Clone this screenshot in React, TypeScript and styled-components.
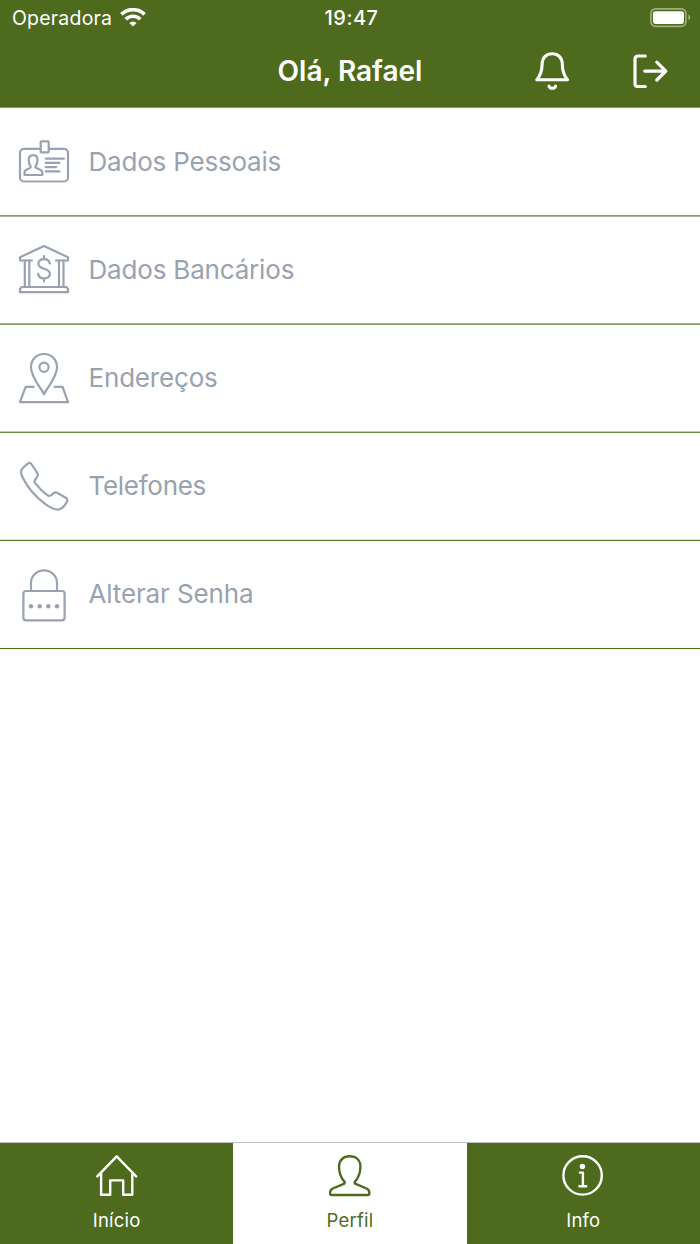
import React from "react";
import styled, { createGlobalStyle } from "styled-components";

const green = "#4d6a1d";
const slate = "#98a2b0";

const GlobalStyle = createGlobalStyle`
  *, *::before, *::after { box-sizing: border-box; }
  body { margin: 0; background: #fff; font-family: Inter, "Liberation Sans", sans-serif; }
`;

const Screen = styled.div`
  display: flex;
  flex-direction: column;
  width: 700px;
  height: 1244px;
  background: #fff;
`;

const Header = styled.header`
  height: 108px;
  background: ${green};
  border-bottom: 1px solid #8a9a6c;
  color: #fff;
`;

const StatusBar = styled.div`
  display: grid;
  grid-template-columns: 1fr auto 1fr;
  align-items: center;
  height: 36px;
  padding: 0 9px 0 12px;
`;

const Carrier = styled.div`
  display: flex;
  align-items: center;
  gap: 8px;
`;

const StatusText = styled.span<{ $bold?: boolean }>`
  font-size: ${(p) => (p.$bold ? 20 : 19.5)}px;
  line-height: 36px;
  font-weight: ${(p) => (p.$bold ? 550 : 400)};
  letter-spacing: ${(p) => (p.$bold ? "0.5px" : "0.2px")};
`;

const BatterySlot = styled.div`
  display: flex;
  justify-content: flex-end;
`;

const TitleBar = styled.div`
  display: grid;
  grid-template-columns: 1fr auto 1fr;
  align-items: center;
  height: 70px;
`;

const Title = styled.h1`
  grid-column: 2;
  margin: 0;
  font-size: 28px;
  line-height: 70px;
  font-weight: 580;
  letter-spacing: 0;
`;

const Actions = styled.div`
  display: flex;
  justify-content: flex-end;
  gap: 61px;
  padding-right: 31px;
`;

const IconButton = styled.button`
  display: flex;
  padding: 0;
  border: 0;
  background: none;
  color: inherit;
`;

const Menu = styled.main`
  flex: 1;
  padding-top: 1px;
`;

const MenuRow = styled.div`
  display: flex;
  align-items: center;
  gap: 18.5px;
  height: 106px;
  padding-left: 18px;
  color: ${slate};
`;

const Divider = styled.div<{ $top: number; $bottom: number }>`
  height: 2px;
  border-top: 1px solid rgba(77, 112, 22, ${(p) => p.$top});
  border-bottom: 1px solid rgba(77, 112, 22, ${(p) => p.$bottom});
`;

const MenuLabel = styled.span<{ $spacing: number }>`
  font-size: 26px;
  line-height: 36px;
  letter-spacing: ${(p) => p.$spacing}px;
`;

const TabBar = styled.nav`
  display: grid;
  grid-template-columns: repeat(3, 1fr);
  height: 102px;
  border-top: 1px solid #bfc1bd;
`;

const Tab = styled.div<{ $active?: boolean }>`
  display: flex;
  flex-direction: column;
  align-items: center;
  gap: 10px;
  padding-top: 12px;
  background: ${(p) => (p.$active ? "#fff" : green)};
  color: ${(p) => (p.$active ? green : "#fff")};
`;

const TabLabel = styled.span`
  font-size: 18.5px;
  line-height: 26px;
  letter-spacing: 0.2px;
`;

const LineArt = styled.svg.attrs({ fill: "none", stroke: "currentColor", strokeLinecap: "round", strokeLinejoin: "round" })`
  display: block;
  flex: none;
`;

const MenuIcon = ({ children }: { children: React.ReactNode }) => (
  <LineArt width="52" height="56" viewBox="0 0 52 56" strokeWidth="2.2">{children}</LineArt>
);

const TabIcon = ({ children }: { children: React.ReactNode }) => (
  <LineArt width="42" height="42" viewBox="0 0 42 42" strokeWidth="2.4">{children}</LineArt>
);

const Wifi = () => (
  <svg width="26" height="20" viewBox="0 0 26 20" fill="none" stroke="currentColor" strokeWidth="3.6">
    <path d="M1.4 6.4A16.6 16.6 0 0 1 24.6 6.4" />
    <path d="M5.7 11.2A10.4 10.4 0 0 1 20.3 11.2" />
    <path d="M13 18.6 9.4 15A5 5 0 0 1 16.6 15Z" fill="currentColor" stroke="none" />
  </svg>
);

const Battery = () => (
  <svg width="42" height="20" viewBox="0 0 42 20">
    <rect x="1.9" y="0.9" width="35" height="17.4" rx="4.5" fill="none" stroke="#fff" strokeOpacity="0.45" strokeWidth="1.7" />
    <rect x="4" y="3.3" width="31" height="12.6" rx="2.3" fill="#fff" />
    <path d="M39.4 6.4Q41.2 7.5 41.2 9.3T39.4 12.2Z" fill="#fff" fillOpacity="0.5" />
  </svg>
);

const Bell = () => (
  <LineArt width="36" height="42" viewBox="0 0 36 42" strokeWidth="3.1">
    <path d="M2.8 29.7C6.4 25.6 8.1 22 8.1 14.2C8.1 7.8 12.2 3.7 18.2 3.7S28.3 7.8 28.3 14.2C28.3 22 30 25.6 33.6 29.7Z" />
    <path d="M15 36.2C15.9 38.9 20.7 38.9 21.6 36.2" />
  </LineArt>
);

const Logout = () => (
  <LineArt width="38" height="42" viewBox="0 0 38 42" strokeWidth="3.2">
    <path d="M14.3 6H7.2Q4 6 4 9.2V33.4Q4 36.5 7.2 36.5H14.3M13.8 21.1H34.8M25.8 12.2 34.8 21.1 25.8 30" />
  </LineArt>
);

const items = [
  {
    label: "Dados Pessoais",
    spacing: -0.2,
    line: [0.68, 0.5],
    art: (
      <>
        <rect x="2" y="14.9" width="48" height="32.6" rx="4" />
        <rect x="22.7" y="7.3" width="8" height="11" rx="0.6" fill="#fff" />
        <path d="M27.8 24.6H46M27.8 28.9H41.4M27.8 33.1H38.2M27.8 37.4H41.4" />
        <path d="M12.8 32.8C10.9 30.6 10.7 28.3 10.7 26C10.7 23 12.4 21.1 15.1 21.1S19.5 23 19.5 26C19.5 28.3 19.3 30.6 17.4 32.8C17.4 35.3 24.3 34.3 24.3 38.6V41H6.5V38.6C6.5 34.3 12.8 35.3 12.8 32.8Z" />
      </>
    ),
  },
  {
    label: "Dados Bancários",
    spacing: -0.18,
    line: [0.52, 0.66],
    art: (
      <>
        <path d="M14 18.5H2V15.3L26 4 50 15.3V18.5H38" />
        <path d="M6.8 18.5V44.8M11.3 18.5V44.8M41 18.5V44.8M45.5 18.5V44.8M3.6 45H48.4L50 47V50.2H2V47Z" />
        <path d="M26 14V17.2M26 36.4V39.4M31.8 21.5C31.2 18.6 29 17.2 26 17.2C22.7 17.2 20.4 19 20.4 21.8C20.4 24.5 22.4 25.7 26 26.7C29.8 27.7 31.9 29 31.9 31.8C31.9 34.6 29.5 36.4 26 36.4C22.6 36.4 20.5 34.8 20 31.8" />
      </>
    ),
  },
  {
    label: "Endereços",
    spacing: -0.18,
    line: [0.36, 0.8],
    art: (
      <>
        <path d="M26 44.3C22.6 37.3 13 27.4 13 17.3C13 9.7 18.6 4 26 4S39 9.7 39 17.3C39 27.4 29.4 37.3 26 44.3Z" />
        <circle cx="26" cy="17.3" r="4.6" />
        <path d="M15.7 36.8H7.6L2 52.2H50L44.6 36.8H36.7" />
      </>
    ),
  },
  {
    label: "Telefones",
    spacing: -0.28,
    line: [0.2, 0.92],
    art: (
      <path d="M9.6 5.8Q11.7 4 13.4 6L19.4 15.2Q20.4 16.8 19.3 18.5L17.2 21.8Q15.8 23.6 17.2 25.2C21 30.2 25.1 34.2 29.3 37.2Q31.1 38.5 32.9 37.3L35.6 35.1Q37.2 33.8 39 34.7L47.8 39.7Q50 41.1 49.1 43.2C47.5 46.9 44.7 49.8 41.6 51.3C38.2 52.4 32.7 49.8 27.7 46.3C19.3 40.2 9.7 29.7 4.8 19.8Q2.4 15 3.2 12.4C4.4 9.9 6.9 7.8 9.6 5.8Z" />
    ),
  },
  {
    label: "Alterar Senha",
    spacing: -0.14,
    line: [0.04, 1],
    art: (
      <>
        <rect x="5.4" y="25" width="41.2" height="29.3" rx="2.5" />
        <path d="M13 25V17.3C13 9.8 18.8 4.4 26 4.4S39 9.8 39 17.3V25" />
        <g fill="currentColor" stroke="none">
          <circle cx="13" cy="40.3" r="2.2" />
          <circle cx="21.7" cy="40.3" r="2.2" />
          <circle cx="30.3" cy="40.3" r="2.2" />
          <circle cx="39" cy="40.3" r="2.2" />
        </g>
      </>
    ),
  },
];

export default function App() {
  return (
    <Screen>
      <GlobalStyle />
      <Header>
        <StatusBar>
          <Carrier>
            <StatusText>Operadora</StatusText>
            <Wifi />
          </Carrier>
          <StatusText $bold>19:47</StatusText>
          <BatterySlot><Battery /></BatterySlot>
        </StatusBar>
        <TitleBar>
          <Title>Olá, Rafael</Title>
          <Actions>
            <IconButton aria-label="Notificações"><Bell /></IconButton>
            <IconButton aria-label="Sair"><Logout /></IconButton>
          </Actions>
        </TitleBar>
      </Header>
      <Menu>
        {items.map((item) => (
          <React.Fragment key={item.label}>
            <MenuRow>
              <MenuIcon>{item.art}</MenuIcon>
              <MenuLabel $spacing={item.spacing}>{item.label}</MenuLabel>
            </MenuRow>
            <Divider $top={item.line[0]} $bottom={item.line[1]} />
          </React.Fragment>
        ))}
      </Menu>
      <TabBar>
        <Tab>
          <TabIcon>
            <path d="M1.3 21.4 20.7 1.3 40.1 21.4M5.1 18.2V39.7H14.2V25.4H27.2V39.7H36.3V18.2" />
          </TabIcon>
          <TabLabel>Início</TabLabel>
        </Tab>
        <Tab $active>
          <TabIcon>
            <path d="M15.4 26.6C11.4 22.2 10 17.5 10 11.5C10 5.2 14.2 1.3 20.7 1.3S31.4 5.2 31.4 11.5C31.4 17.5 30 22.2 26 26.6C25.3 27.8 25.8 28.6 27.2 29.2L37.6 33.5Q40.3 34.7 40.3 37.4V38.6Q40.3 40 38.9 40H2.5Q1.1 40 1.1 38.6V37.4Q1.1 34.7 3.8 33.5L14.2 29.2C15.6 28.6 16.1 27.8 15.4 26.6Z" />
          </TabIcon>
          <TabLabel>Perfil</TabLabel>
        </Tab>
        <Tab>
          <TabIcon>
            <circle cx="20.6" cy="20.4" r="19.2" />
            <circle cx="20.4" cy="11.5" r="2.7" fill="currentColor" stroke="none" />
            <path d="M17.9 17.6H20.9V31.2M17.4 31.2H24.2" />
          </TabIcon>
          <TabLabel>Info</TabLabel>
        </Tab>
      </TabBar>
    </Screen>
  );
}
